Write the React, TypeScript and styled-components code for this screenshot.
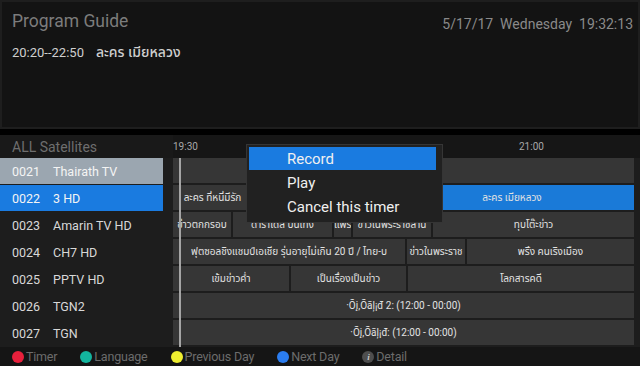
import styled, { createGlobalStyle } from 'styled-components';

const GlobalStyle = createGlobalStyle`
  html, body {
    margin: 0;
    padding: 0;
    background: #000;
  }
  body {
    font-family: Roboto, 'Noto Sans Thai', 'Noto Sans', 'DejaVu Sans', sans-serif;
  }
`;

const Screen = styled.div`
  width: 640px;
  height: 366px;
  background: #000;
  display: flex;
  flex-direction: column;
  overflow: hidden;
`;

const TopPanel = styled.div`
  height: 129px;
  box-sizing: border-box;
  background: #131313;
  border: 2px solid #1e1e1e;
  display: flex;
  justify-content: space-between;
  align-items: flex-start;
  padding: 7px 5px 0 10px;
  margin-bottom: 6px;
`;

const TopLeft = styled.div`
  display: flex;
  flex-direction: column;
`;

const Title = styled.div`
  font-size: 17.5px;
  color: #7c7c7c;
  line-height: 24px;
`;

const NowPlaying = styled.div`
  display: flex;
  align-items: center;
  gap: 12px;
  margin-top: 9px;
  color: #cfcfcf;
  font-size: 13px;
`;

const ProgName = styled.span`
  font-size: 14px;
  font-weight: 500;
`;

const Clock = styled.div`
  white-space: pre;
  font-size: 14px;
  color: #8a8a8a;
  margin-top: 7px;
`;

const Guide = styled.div`
  position: relative;
  flex: 1;
  display: flex;
  flex-direction: column;
  background: #1d1d1d;
`;

const HeaderRow = styled.div`
  height: 23px;
  display: flex;
  background: #191919;
`;

const SatLabel = styled.div`
  width: 173px;
  box-sizing: border-box;
  padding-left: 12px;
  font-size: 14px;
  color: #6e6e6e;
  line-height: 24px;
`;

const Timeline = styled.div`
  position: relative;
  flex: 1;
  background: #161616;
`;

const TimeMark = styled.span<{ $left: number }>`
  position: absolute;
  left: ${(p) => p.$left}px;
  top: 6px;
  font-size: 10px;
  color: #a8a8a8;
`;

const Body = styled.div`
  display: flex;
  height: 189px;
`;

const ChannelList = styled.div`
  width: 163px;
  margin-right: 10px;
  display: flex;
  flex-direction: column;
`;

const ChannelRow = styled.div<{ $state?: 'focus' | 'active' }>`
  height: 26px;
  margin-bottom: 1px;
  display: flex;
  align-items: center;
  font-size: 12.5px;
  color: ${(p) => (p.$state ? '#f4f4f4' : '#d8d8d8')};
  background: ${(p) =>
    p.$state === 'focus' ? '#9ba6b0' : p.$state === 'active' ? '#1a7be0' : 'transparent'};
`;

const ChNum = styled.span`
  width: 41px;
  padding-left: 12px;
`;

const Grid = styled.div`
  position: relative;
  width: 461px;
  display: flex;
  flex-direction: column;
  gap: 2px;
`;

const GridRow = styled.div`
  height: 25px;
  display: flex;
  gap: 2px;
`;

const Cell = styled.div<{ $w: number; $active?: boolean }>`
  width: ${(p) => p.$w}px;
  flex-shrink: 0;
  background: ${(p) => (p.$active ? '#1a7ad8' : '#363636')};
  color: #e2e2e2;
  font-size: 10px;
  line-height: 25px;
  text-align: center;
  white-space: nowrap;
  overflow: hidden;
`;

const NowMarker = styled.div`
  position: absolute;
  left: 6px;
  top: 0;
  bottom: 0;
  width: 2px;
  background: #a5a5a5;
`;

const Popup = styled.div`
  position: absolute;
  left: 246px;
  top: 9px;
  width: 197px;
  box-sizing: border-box;
  background: #212121;
  border: 1px solid #353535;
  padding: 2px 6px 4px 2px;
  display: flex;
  flex-direction: column;
  gap: 1px;
`;

const PopupItem = styled.div<{ $selected?: boolean }>`
  height: 23px;
  display: flex;
  align-items: center;
  padding-left: 38px;
  font-size: 15px;
  color: #f0f0f0;
  background: ${(p) => (p.$selected ? '#1a7be0' : 'transparent')};
`;

const Footer = styled.div`
  height: 19px;
  background: #151515;
  display: flex;
  align-items: center;
  padding-left: 12px;
  gap: 23px;
`;

const Legend = styled.div`
  display: flex;
  align-items: center;
  gap: 2px;
  font-size: 12.5px;
  letter-spacing: -0.2px;
  color: #6c6c6c;
`;

const Dot = styled.span<{ $color: string }>`
  width: 12px;
  height: 12px;
  border-radius: 50%;
  background: ${(p) => p.$color};
`;

const InfoDot = styled.span`
  width: 12px;
  height: 12px;
  border-radius: 50%;
  background: #4e4e4e;
  color: #c8c8c8;
  font-size: 9px;
  font-weight: 700;
  font-style: italic;
  font-family: 'Liberation Serif', serif;
  display: flex;
  align-items: center;
  justify-content: center;
`;

const channels = [
  { num: '0021', name: 'Thairath TV', state: 'focus' as const },
  { num: '0022', name: '3 HD', state: 'active' as const },
  { num: '0023', name: 'Amarin TV HD' },
  { num: '0024', name: 'CH7 HD' },
  { num: '0025', name: 'PPTV HD' },
  { num: '0026', name: 'TGN2' },
  { num: '0027', name: 'TGN' },
];

type Prog = { w: number; t: string; active?: boolean };

const schedule: Prog[][] = [
  [{ w: 461, t: '' }],
  [
    { w: 79, t: 'ละคร ที่หนี่มีรัก' },
    { w: 134, t: '' },
    { w: 244, t: 'ละคร เมียหลวง', active: true },
  ],
  [
    { w: 58, t: 'ข่าวตกกรอบ' },
    { w: 99, t: 'ดาราเดลี่ บันเทิง' },
    { w: 17, t: 'แพร' },
    { w: 78, t: 'ข่าวในพระราชสำนั' },
    { w: 201, t: 'ทุบโต๊ะข่าว' },
  ],
  [
    { w: 232, t: 'ฟุตซอลชิงแชมป์เอเชีย รุ่นอายุไม่เกิน 20 ปี / ไทย-บ' },
    { w: 58, t: 'ข่าวในพระราช' },
    { w: 167, t: 'พริ้ง คนเริงเมือง' },
  ],
  [
    { w: 116, t: 'เข้มข่าวค่ำ' },
    { w: 115, t: 'เป็นเรื่องเป็นข่าว' },
    { w: 226, t: 'โลกสารคดี' },
  ],
  [{ w: 461, t: '·Õį‚Õāļ¡đ 2: (12:00 - 00:00)' }],
  [{ w: 461, t: '·Õį‚Õāļ¡đ: (12:00 - 00:00)' }],
];

const App = () => {
  return (
    <Screen>
      <GlobalStyle />
      <TopPanel>
        <TopLeft>
          <Title>Program Guide</Title>
          <NowPlaying>
            <span>20:20--22:50</span>
            <ProgName>ละคร เมียหลวง</ProgName>
          </NowPlaying>
        </TopLeft>
        <Clock>{'5/17/17  Wednesday  19:32:13'}</Clock>
      </TopPanel>

      <Guide>
        <HeaderRow>
          <SatLabel>ALL Satellites</SatLabel>
          <Timeline>
            <TimeMark $left={0}>19:30</TimeMark>
            <TimeMark $left={346}>21:00</TimeMark>
          </Timeline>
        </HeaderRow>
        <Body>
          <ChannelList>
            {channels.map((ch) => (
              <ChannelRow key={ch.num} $state={ch.state}>
                <ChNum>{ch.num}</ChNum>
                <span>{ch.name}</span>
              </ChannelRow>
            ))}
          </ChannelList>
          <Grid>
            {schedule.map((row, i) => (
              <GridRow key={i}>
                {row.map((p, j) => (
                  <Cell key={j} $w={p.w} $active={p.active}>
                    {p.t}
                  </Cell>
                ))}
              </GridRow>
            ))}
            <NowMarker />
          </Grid>
        </Body>
        <Popup>
          <PopupItem $selected>Record</PopupItem>
          <PopupItem>Play</PopupItem>
          <PopupItem>Cancel this timer</PopupItem>
        </Popup>
      </Guide>

      <Footer>
        <Legend>
          <Dot $color="#e8203c" />
          Timer
        </Legend>
        <Legend>
          <Dot $color="#13b59e" />
          Language
        </Legend>
        <Legend>
          <Dot $color="#eeee30" />
          Previous Day
        </Legend>
        <Legend>
          <Dot $color="#2b7df0" />
          Next Day
        </Legend>
        <Legend>
          <InfoDot>i</InfoDot>
          Detail
        </Legend>
      </Footer>
    </Screen>
  );
};

export default App;
